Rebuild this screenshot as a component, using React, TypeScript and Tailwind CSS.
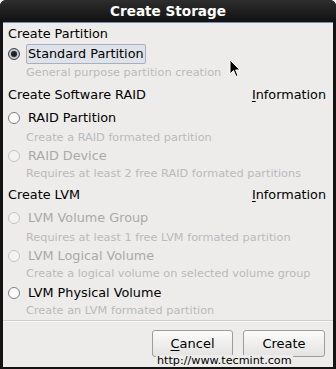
// Create Storage dialog (anaconda-style)

type Opt = {
  label: string;
  desc: string;
  state: 'checked' | 'enabled' | 'disabled';
};

const font = "font-['DejaVu_Sans',_'Liberation_Sans',_sans-serif]";

function Radio({ state }: { state: Opt['state'] }) {
  if (state === 'checked') {
    return (
      <span className="flex h-[12px] w-[12px] items-center justify-center rounded-full border border-[#3f4348] bg-[#bcc4ce]">
        <span className="h-[6px] w-[6px] rounded-full bg-[#1f2226]" />
      </span>
    );
  }
  return (
    <span
      className={`h-[12px] w-[12px] rounded-full border ${
        state === 'enabled' ? 'border-[#7d7d7d] bg-white' : 'border-[#c4c4c4] bg-[#f2f2f2]'
      }`}
    />
  );
}

function Row({ h, children }: { h: string; children: React.ReactNode }) {
  return <div className={`flex items-center ${h}`}>{children}</div>;
}

function Section({ title, info, h }: { title: string; info?: boolean; h: string }) {
  return (
    <Row h={h}>
      <span className="flex-1 pl-[5px] text-[12.8px] text-black">{title}</span>
      {info && (
        <span className="pr-[7px] text-[12.8px] text-black">
          <span className="underline underline-offset-2">I</span>nformation
        </span>
      )}
    </Row>
  );
}

function Option({ opt, h, dh }: { opt: Opt; h: string; dh: string }) {
  const labelColor = opt.state === 'disabled' ? 'text-[#a9a9a9]' : 'text-black';
  return (
    <>
      <Row h={h}>
        <span className="ml-[5px] flex w-[20px]">
          <Radio state={opt.state} />
        </span>
        {opt.state === 'checked' ? (
          <span className="-ml-[2px] flex h-[20px] items-center rounded-[2px] border border-[#a7b1bd] bg-[#dfe3e9] px-[1px] text-[12.8px] text-black">
            {opt.label}
          </span>
        ) : (
          <span className={`text-[12.8px] ${labelColor}`}>{opt.label}</span>
        )}
      </Row>
      <Row h={dh}>
        <span className="pl-[23px] text-[11.3px] text-[#bababa]">{opt.desc}</span>
      </Row>
    </>
  );
}

export default function App() {
  return (
    <div className={`relative h-[369px] w-[336px] bg-white ${font}`}>
      <div className="flex h-[369px] flex-col rounded-t-[6px] bg-[#141414] px-[3px] pb-[2px]">
        {/* Title bar */}
        <div className="-mx-[3px] flex h-[22px] items-center justify-center rounded-t-[6px] bg-gradient-to-b from-[#2e2e2e] to-[#111] text-[13.6px] font-bold text-white">
          Create Storage
        </div>
        <div className="h-px bg-[#6d8db3]" />

        {/* Body */}
        <div className="flex flex-1 flex-col bg-[#edeceb]">
          <Section title="Create Partition" h="h-[21px]" />
          <Option
            opt={{ label: 'Standard Partition', desc: 'General purpose partition creation', state: 'checked' }}
            h="h-[20px]"
            dh="h-[19px]"
          />
          <Section title="Create Software RAID" info h="h-[23px]" />
          <Option
            opt={{ label: 'RAID Partition', desc: 'Create a RAID formated partition', state: 'enabled' }}
            h="h-[24px]"
            dh="h-[17px]"
          />
          <Option
            opt={{ label: 'RAID Device', desc: 'Requires at least 2 free RAID formated partitions', state: 'disabled' }}
            h="h-[18px]"
            dh="h-[18px]"
          />
          <Section title="Create LVM" info h="h-[23px]" />
          <Option
            opt={{ label: 'LVM Volume Group', desc: 'Requires at least 1 free LVM formated partition', state: 'disabled' }}
            h="h-[24px]"
            dh="h-[17px]"
          />
          <Option
            opt={{ label: 'LVM Logical Volume', desc: 'Create a logical volume on selected volume group', state: 'disabled' }}
            h="h-[18px]"
            dh="h-[18px]"
          />
          <Option
            opt={{ label: 'LVM Physical Volume', desc: 'Create an LVM formated partition', state: 'enabled' }}
            h="h-[19px]"
            dh="h-[18px]"
          />

          <div className="h-px bg-[#cfcecc]" />
          <div className="h-px bg-white/70" />

          {/* Buttons */}
          <div className="flex justify-end gap-[10px] pr-[8px] pt-[8px]">
            <button className="flex h-[27px] w-[81px] items-center justify-center rounded-[3px] border border-[#9d9d9d] bg-gradient-to-b from-[#fbfbfb] to-[#e4e3e2] text-[13px] text-black">
              <span className="underline underline-offset-2">C</span>ancel
            </button>
            <button className="flex h-[27px] w-[82px] items-center justify-center rounded-[3px] border border-[#9d9d9d] bg-gradient-to-b from-[#fbfbfb] to-[#e4e3e2] text-[13px] text-black">
              Create
            </button>
          </div>
        </div>
      </div>

      {/* mouse pointer */}
      <svg className="absolute left-[229px] top-[59px]" width="12" height="19" viewBox="0 0 12 19">
        <path d="M1 1 L1 15 L4.5 11.5 L7 17.5 L9 16.6 L6.6 11 L11 11 Z" fill="#000" stroke="#fff" strokeWidth="1" />
      </svg>

      {/* watermark */}
      <span className="absolute left-[156px] top-[355px] bg-[#edeceb] px-px text-[11.2px] leading-[12px] text-black">
        http://www.tecmint.com
      </span>
    </div>
  );
}
